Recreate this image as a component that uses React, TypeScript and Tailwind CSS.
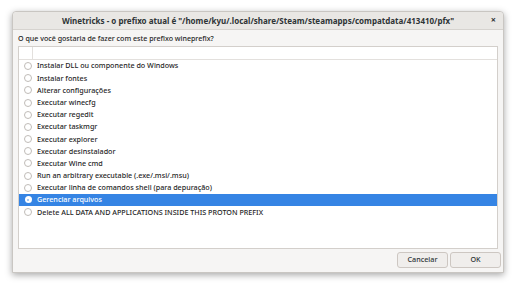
import React from 'react';

const items = [
  'Instalar DLL ou componente do Windows',
  'Instalar fontes',
  'Alterar configurações',
  'Executar winecfg',
  'Executar regedit',
  'Executar taskmgr',
  'Executar explorer',
  'Executar desinstalador',
  'Executar Wine cmd',
  'Run an arbitrary executable (.exe/.msi/.msu)',
  'Executar linha de comandos shell (para depuração)',
  'Gerenciar arquivos',
  'Delete ALL DATA AND APPLICATIONS INSIDE THIS PROTON PREFIX',
];

const selected = 11;

export default function App() {
  return (
    <div
      className="w-[517px] h-[286px] bg-white pt-[11px] pl-[12px] overflow-hidden"
      style={{ fontFamily: '"Noto Sans", "DejaVu Sans", sans-serif' }}
    >
      <div className="w-[492px] h-[262px] flex flex-col bg-[#f6f5f4] rounded-t-[4px] border border-[#c9c6c2] shadow-[0_2px_7px_rgba(0,0,0,0.35)]">
        <div className="h-[18px] shrink-0 flex items-center justify-center relative bg-[#e9e7e4] border-b border-[#d6d3cf] rounded-t-[4px]">
          <span className="text-[8px] font-bold text-[#2e3436] leading-none">
            Winetricks - o prefixo atual é "/home/kyu/.local/share/Steam/steamapps/compatdata/413410/pfx"
          </span>
          <span className="absolute right-[7px] top-[3px] text-[9px] font-bold text-[#2e3436] leading-none">×</span>
        </div>
        <div className="flex-1 flex flex-col px-[5px] pt-[3px] pb-[3px]">
          <div className="h-[12px] shrink-0 flex items-center text-[7.1px] font-medium text-[#1f1f1f] leading-none">
            O que você gostaria de fazer com este prefixo wineprefix?
          </div>
          <div className="mt-[1px] h-[203px] shrink-0 bg-white border border-[#d3cfcb] flex flex-col">
            <div className="h-[13px] shrink-0 flex border-b border-[#e3e0dd]">
              <div className="w-[14px] border-r border-[#e3e0dd]" />
              <div className="flex-1" />
            </div>
            {items.map((label, i) => (
              <div
                key={label}
                className={`h-[12.18px] shrink-0 flex items-center text-[7.2px] font-medium leading-none ${
                  i === selected ? 'bg-[#3584e4] text-white' : 'text-[#1f1f1f]'
                }`}
              >
                <div className="w-[17px] flex justify-center pl-[1px]">
                  {i === selected ? (
                    <span className="w-[7px] h-[7px] rounded-full bg-white flex items-center justify-center">
                      <span className="w-[2px] h-[2px] rounded-full bg-[#8fb8ee]" />
                    </span>
                  ) : (
                    <span className="w-[8px] h-[8px] rounded-full bg-white border border-[#c0bcb8]" />
                  )}
                </div>
                <span className="ml-[1px]">{label}</span>
              </div>
            ))}
          </div>
          <div className="mt-[3px] flex justify-end gap-[2px] -mr-[3px]">
            <button className="w-[51px] h-[16px] rounded-[3px] border border-[#cdc7c2] bg-[#f0eeec] text-[7.2px] font-medium text-[#2e3436] leading-none">
              Cancelar
            </button>
            <button className="w-[51px] h-[16px] rounded-[3px] border border-[#cdc7c2] bg-[#f0eeec] text-[7.2px] font-medium text-[#2e3436] leading-none">
              OK
            </button>
          </div>
        </div>
      </div>
    </div>
  );
}
